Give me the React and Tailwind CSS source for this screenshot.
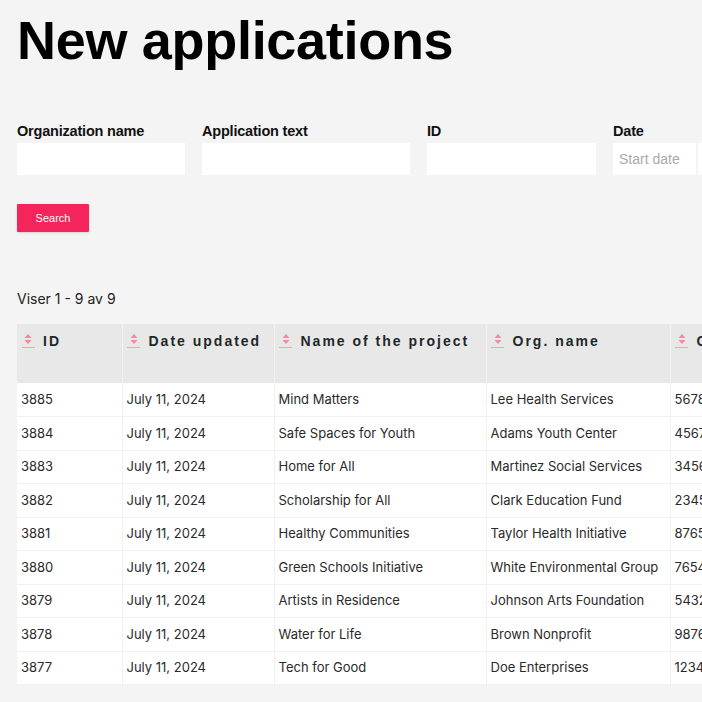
const rows = [
  ['3885', 'July 11, 2024', 'Mind Matters', 'Lee Health Services', '567890123'],
  ['3884', 'July 11, 2024', 'Safe Spaces for Youth', 'Adams Youth Center', '456789012'],
  ['3883', 'July 11, 2024', 'Home for All', 'Martinez Social Services', '345678901'],
  ['3882', 'July 11, 2024', 'Scholarship for All', 'Clark Education Fund', '234567890'],
  ['3881', 'July 11, 2024', 'Healthy Communities', 'Taylor Health Initiative', '876543210'],
  ['3880', 'July 11, 2024', 'Green Schools Initiative', 'White Environmental Group', '765432109'],
  ['3879', 'July 11, 2024', 'Artists in Residence', 'Johnson Arts Foundation', '543210987'],
  ['3878', 'July 11, 2024', 'Water for Life', 'Brown Nonprofit', '987654321'],
  ['3877', 'July 11, 2024', 'Tech for Good', 'Doe Enterprises', '123456789'],
];

const columns = [
  { label: 'ID', width: 'w-[105px]' },
  { label: 'Date updated', width: 'w-[152px]' },
  { label: 'Name of the project', width: 'w-[212px]' },
  { label: 'Org. name', width: 'w-[184px]' },
  { label: 'Company no.', width: 'w-[160px]' },
];

function SortIcon() {
  return (
    <span className="flex flex-col items-center w-[12px] shrink-0">
      <svg width="8" height="12" viewBox="0 0 8 12">
        <path d="M4 1 L7.5 5 L0.5 5 Z" fill="#f08a9c" />
        <path d="M4 11 L7.5 7 L0.5 7 Z" fill="#f08a9c" />
      </svg>
      <span className="mt-[2px] h-px w-[13px] bg-[#f3a3b2]" />
    </span>
  );
}

function Field({ label, width, placeholder }) {
  return (
    <div className="flex flex-col">
      <label className="text-[14.5px] font-bold text-[#111] leading-[18px] tracking-[-0.2px] mb-[3px]">
        {label}
      </label>
      <input
        className={`${width} h-[32px] bg-white px-[6px] text-[14px] text-[#333] placeholder:text-[#aaa] outline-none`}
        placeholder={placeholder}
      />
    </div>
  );
}

export default function App() {
  return (
    <div
      className="w-[702px] h-[702px] overflow-hidden bg-[#f4f4f4] pl-[17px]"
      style={{ fontFamily: '"Liberation Sans", Arial, sans-serif' }}
    >
      <h1 className="pt-[10px] text-[54px] font-bold leading-[60px] tracking-[-0.3px] text-black whitespace-nowrap">
        New applications
      </h1>

      {/* Filters */}
      <div className="mt-[52px] flex gap-[17px] whitespace-nowrap">
        <Field label="Organization name" width="w-[168px]" />
        <Field label="Application text" width="w-[208px]" />
        <Field label="ID" width="w-[169px]" />
        <div className="flex flex-col">
          <label className="text-[14.5px] font-bold text-[#111] leading-[18px] tracking-[-0.2px] mb-[3px]">
            Date
          </label>
          <div className="flex gap-[2px]">
            <input
              className="w-[83px] h-[32px] bg-white px-[6px] text-[14px] placeholder:text-[#aaa] outline-none"
              placeholder="Start date"
            />
            <input
              className="w-[83px] h-[32px] bg-white px-[6px] text-[14px] placeholder:text-[#aaa] outline-none"
              placeholder="End date"
            />
          </div>
        </div>
      </div>

      <button className="mt-[29px] w-[72px] h-[28px] bg-[#f4255a] text-white text-[11px] rounded-[1px] shadow-sm">
        Search
      </button>

      <p
        className="mt-[56px] text-[14px] text-[#222]"
        style={{ fontFamily: 'Inter, "Liberation Sans", sans-serif' }}
      >
        Viser 1 - 9 av 9
      </p>

      {/* Table */}
      <table className="mt-[15px] border-collapse table-fixed w-[813px]">
        <thead>
          <tr className="bg-[#e8e8e8]">
            {columns.map((c) => (
              <th
                key={c.label}
                className={`${c.width} h-[59px] align-top text-left px-[5px] pt-[9px] border-r border-[#f2f2f2]`}
              >
                <div className="flex items-start gap-[9px] whitespace-nowrap">
                  <SortIcon />
                  <span className="text-[14px] font-bold tracking-[2px] text-[#1f2828] leading-[17px]">
                    {c.label}
                  </span>
                </div>
              </th>
            ))}
          </tr>
        </thead>
        <tbody style={{ fontFamily: 'Inter, "Liberation Sans", sans-serif' }}>
          {rows.map((r) => (
            <tr key={r[0]} className="bg-white">
              {r.map((cell, i) => (
                <td
                  key={i}
                  className="h-[33.5px] px-[4px] text-[13px] text-[#2a2a2a] whitespace-nowrap overflow-hidden border-r border-b border-[#f1f1f1]"
                >
                  {cell}
                </td>
              ))}
            </tr>
          ))}
        </tbody>
      </table>
    </div>
  );
}
